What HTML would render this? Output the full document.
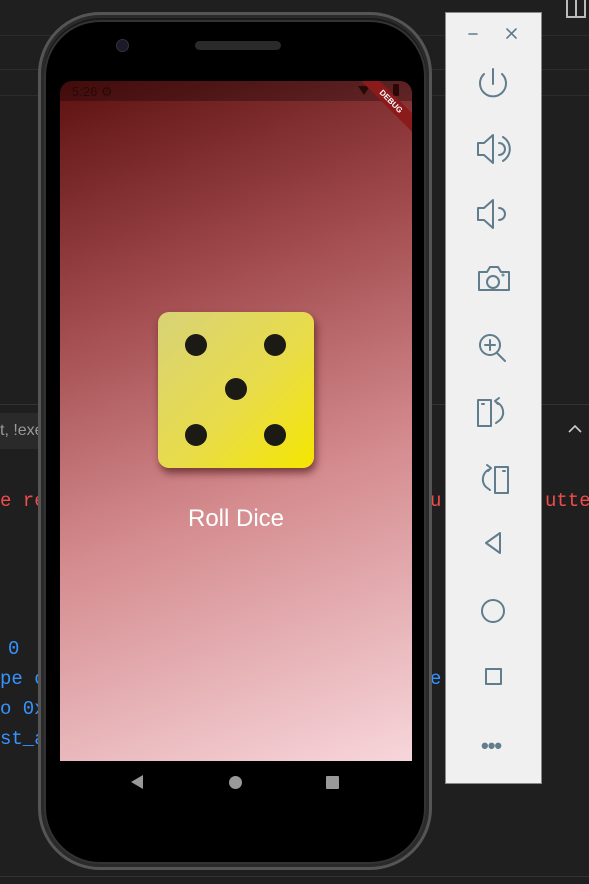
<!DOCTYPE html>
<html><head><style>
*{margin:0;padding:0;box-sizing:border-box}
body{width:589px;height:884px;background:#1f1f1f;position:relative;overflow:hidden;font-family:"Liberation Sans",sans-serif}
.abs{position:absolute}
.code{font-family:"Liberation Mono",monospace;font-size:19px;position:absolute;white-space:nowrap}
</style></head><body>
<div class="abs" style="left:0;top:35px;width:589px;height:1px;background:#2c2c2c"></div>
<div class="abs" style="left:0;top:69px;width:589px;height:1px;background:#2c2c2c"></div>
<div class="abs" style="left:0;top:95px;width:589px;height:1px;background:#2c2c2c"></div>
<div class="abs" style="left:0;top:404px;width:589px;height:1px;background:#333"></div>
<div class="abs" style="left:0;top:413px;width:40px;height:36px;background:#2a2a2a;color:#999;font-size:16px;line-height:36px;white-space:nowrap;overflow:hidden">t, !exe</div>
<div class="code" style="left:0;top:490px;color:#f14c4c">e re</div>
<div class="code" style="left:430px;top:490px;color:#f14c4c">u</div>
<div class="code" style="left:545px;top:490px;color:#f14c4c">utter</div>
<div class="code" style="left:8px;top:638px;color:#3794ff">0</div>
<div class="code" style="left:0;top:668px;color:#3794ff">pe c</div>
<div class="code" style="left:430px;top:668px;color:#3794ff">e</div>
<div class="code" style="left:0;top:698px;color:#3794ff">o 0x</div>
<div class="code" style="left:0;top:728px;color:#3794ff">st_a</div>
<div class="abs" style="left:566px;top:0;width:20px;height:18px;border:2px solid #bbb;border-top:none"></div>
<div class="abs" style="left:575px;top:0;width:2px;height:18px;background:#bbb"></div>
<svg class="abs" style="left:566px;top:422px" width="18" height="14" fill="none" stroke="#ccc" stroke-width="1.6"><path d="M3 10l6-6 6 6"/></svg>
<div class="abs" style="left:0;top:876px;width:589px;height:1px;background:#333"></div>

<!-- phone -->
<div class="abs" style="left:38px;top:12px;width:394px;height:858px;border-radius:62px;background:#1a1a1a;border:3px solid #555;box-shadow:inset 0 0 0 3px #2a2a2a"></div>
<div class="abs" style="left:44px;top:20px;width:382px;height:844px;border-radius:56px;background:#000;border:2px solid #333"></div>
<div class="abs" style="left:116px;top:39px;width:13px;height:13px;border-radius:50%;background:#1a1a2a;border:1px solid #333"></div>
<div class="abs" style="left:195px;top:41px;width:86px;height:9px;border-radius:5px;background:#2a2a2a"></div>

<div class="abs" style="left:60px;top:81px;width:352px;height:680px;border-radius:12px 12px 0 0;overflow:hidden;background:linear-gradient(160deg,#5c1010 0%,#a0494c 30%,#d48b8e 60%,#f7d6db 100%)">
  <div class="abs" style="left:0;top:0;width:352px;height:20px;background:rgba(0,0,0,0.28)"></div>
  <div class="abs" style="left:12px;top:3px;font-size:13px;color:#2a0808">5:26 ⚙</div>
  <div class="abs" style="left:298px;top:5px;width:0;height:0;border-left:6px solid transparent;border-right:6px solid transparent;border-top:9px solid #2a0808"></div>
  <div class="abs" style="left:333px;top:3px;width:6px;height:12px;background:#2a0808;border-radius:1px"></div>
  <div class="abs" style="left:286px;top:14px;width:90px;height:13px;background:#8b1a1a;transform:rotate(45deg);color:#fff;font-size:8px;font-weight:bold;text-align:center;line-height:13px">DEBUG</div>
  <div class="abs" style="left:98px;top:231px;width:156px;height:156px;border-radius:11px;background:linear-gradient(135deg,#d8d278 0%,#e8dc4a 55%,#f5e600 100%);box-shadow:2px 5px 8px rgba(60,10,10,0.6)">
    <div class="abs" style="left:27px;top:22px;width:22px;height:22px;border-radius:50%;background:#1c1a14"></div>
    <div class="abs" style="left:106px;top:22px;width:22px;height:22px;border-radius:50%;background:#1c1a14"></div>
    <div class="abs" style="left:67px;top:66px;width:22px;height:22px;border-radius:50%;background:#1c1a14"></div>
    <div class="abs" style="left:27px;top:112px;width:22px;height:22px;border-radius:50%;background:#1c1a14"></div>
    <div class="abs" style="left:106px;top:112px;width:22px;height:22px;border-radius:50%;background:#1c1a14"></div>
  </div>
  <div class="abs" style="left:0;top:424px;width:352px;text-align:center;color:#fff;font-size:24px">Roll Dice</div>
</div>
<div class="abs" style="left:131px;top:775px;width:0;height:0;border-top:7px solid transparent;border-bottom:7px solid transparent;border-right:12px solid #999"></div>
<div class="abs" style="left:229px;top:776px;width:13px;height:13px;border-radius:50%;background:#999"></div>
<div class="abs" style="left:326px;top:776px;width:13px;height:13px;background:#999;border-radius:1px"></div>

<!-- side panel -->
<div class="abs" style="left:445px;top:12px;width:97px;height:772px;background:#f0f0f0;border:1px solid #888"></div>
<svg class="abs" style="left:445px;top:12px" width="97" height="772" fill="none" stroke="#5f7d8c" stroke-width="2" stroke-linecap="round" stroke-linejoin="round">
<path d="M24 22h8M62 17l9 9M71 17l-9 9" stroke-width="1.6"/>
<path d="M48 57v15M39 62a13 13 0 1 0 18 0"/>
<path d="M33 131h6l9-8v28l-9-8h-6zM54 131a6 6 0 0 1 0 12M58 125a14 14 0 0 1 0 24"/>
<path d="M33 196h6l9-8v28l-9-8h-6zM54 196a6 6 0 0 1 0 12"/>
<path d="M34 260h8l3-5h8l3 5h8v18h-30z"/><circle cx="48" cy="270" r="6"/><circle cx="58" cy="263" r=".5"/>
<circle cx="45" cy="333" r="10"/><path d="M52 341l8 8M40 333h10M45 328v10"/>
<path d="M33 388h13v26h-13zM37 392h2M51 390a11 11 0 0 1 4 18l-4 3M54 386l-4 3 3 3"/>
<path d="M50 455h13v26h-13zM58 459h2M45 457a11 11 0 0 0-4 18l4 3M42 453l4 3-3 3"/>
<path d="M55 521v20l-14-10z"/>
<circle cx="48" cy="599" r="11"/>
<path d="M41 657h15v15h-15z"/>
</svg>
<div class="abs" style="left:481px;top:733px;color:#5f7d8c;font-size:22px;letter-spacing:-1px;font-weight:bold">•••</div>
</body></html>
